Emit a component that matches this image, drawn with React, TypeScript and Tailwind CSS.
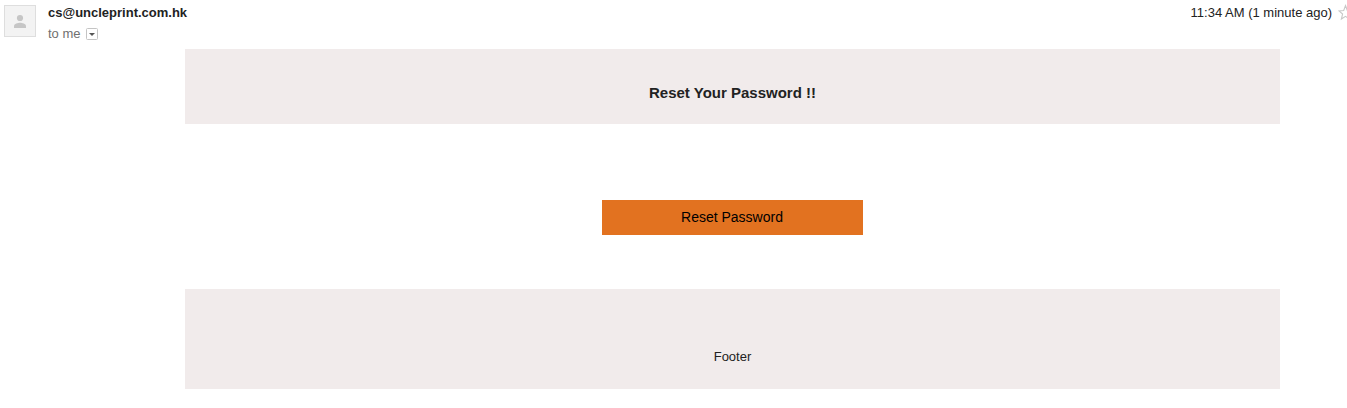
function Avatar() {
  return (
    <div className="mt-[5px] ml-1 flex h-8 w-8 shrink-0 border border-[#dedede] bg-[#f3f3f3]">
      <svg viewBox="0 0 30 30" className="h-[30px] w-[30px]" fill="#c6c6c6">
        <circle cx="15" cy="12" r="3.1" />
        <path d="M9 22v-1.8c0-2.4 4-3.4 6-3.4s6 1 6 3.4V22z" />
      </svg>
    </div>
  );
}

function MessageHeader() {
  return (
    <header className="flex h-[49px] w-full">
      <Avatar />
      <div className="ml-3 flex flex-col pt-[3px] text-[13px]">
        <div className="h-5 leading-5 font-bold">cs@uncleprint.com.hk</div>
        <div className="flex h-[22px] items-center text-[#707070]">
          <span className="w-[38px]">to me</span>
          <button aria-label="Show details" className="h-3 w-3 rounded-[1px]">
            <svg viewBox="0 0 12 12" className="block h-3 w-3">
              <rect x=".5" y=".5" width="11" height="11" rx="1" fill="#fff" stroke="#c4c4c4" />
              <path d="M3 5h6L6 8z" fill="#555" />
            </svg>
          </button>
        </div>
      </div>
      <div className="ml-auto flex h-6 shrink-0 overflow-hidden pt-[3px] text-[13px] leading-5 whitespace-nowrap">
        <span>11:34 AM (1 minute ago)</span>
        <div className="ml-1.5 w-[9px] overflow-hidden">
          <svg viewBox="0 0 15 18" className="block h-[18px] w-[15px]" fill="none" stroke="#c8c8c8" strokeWidth="1.1">
            <path d="M7.5 2.5l1.8 5 4.8.4-3.7 3.1 1.2 5-4.1-2.7L3.4 16l1.2-5L.9 7.9l4.8-.4z" />
          </svg>
        </div>
      </div>
    </header>
  );
}

export default function App() {
  return (
    <main className="flex h-[408px] w-full flex-col overflow-hidden bg-white font-['Liberation_Sans',Arial,sans-serif] text-[#222]">
      <MessageHeader />
      <article className="ml-[185px] flex w-[1095px] flex-col">
        <div className="flex h-[75px] justify-center bg-[#f1ebeb] pt-[34px]">
          <h1 className="text-[15px] leading-5 font-bold">Reset Your Password !!</h1>
        </div>
        <div className="flex h-[165px] justify-center pt-[76px]">
          <button className="h-[35px] w-[261px] bg-[#e27220] pr-px pb-0.5 text-[14px] leading-5 text-black">Reset Password</button>
        </div>
        <footer className="flex h-[100px] justify-center bg-[#f1ebeb] pt-[58px] text-[13px] leading-5">Footer</footer>
      </article>
    </main>
  );
}
